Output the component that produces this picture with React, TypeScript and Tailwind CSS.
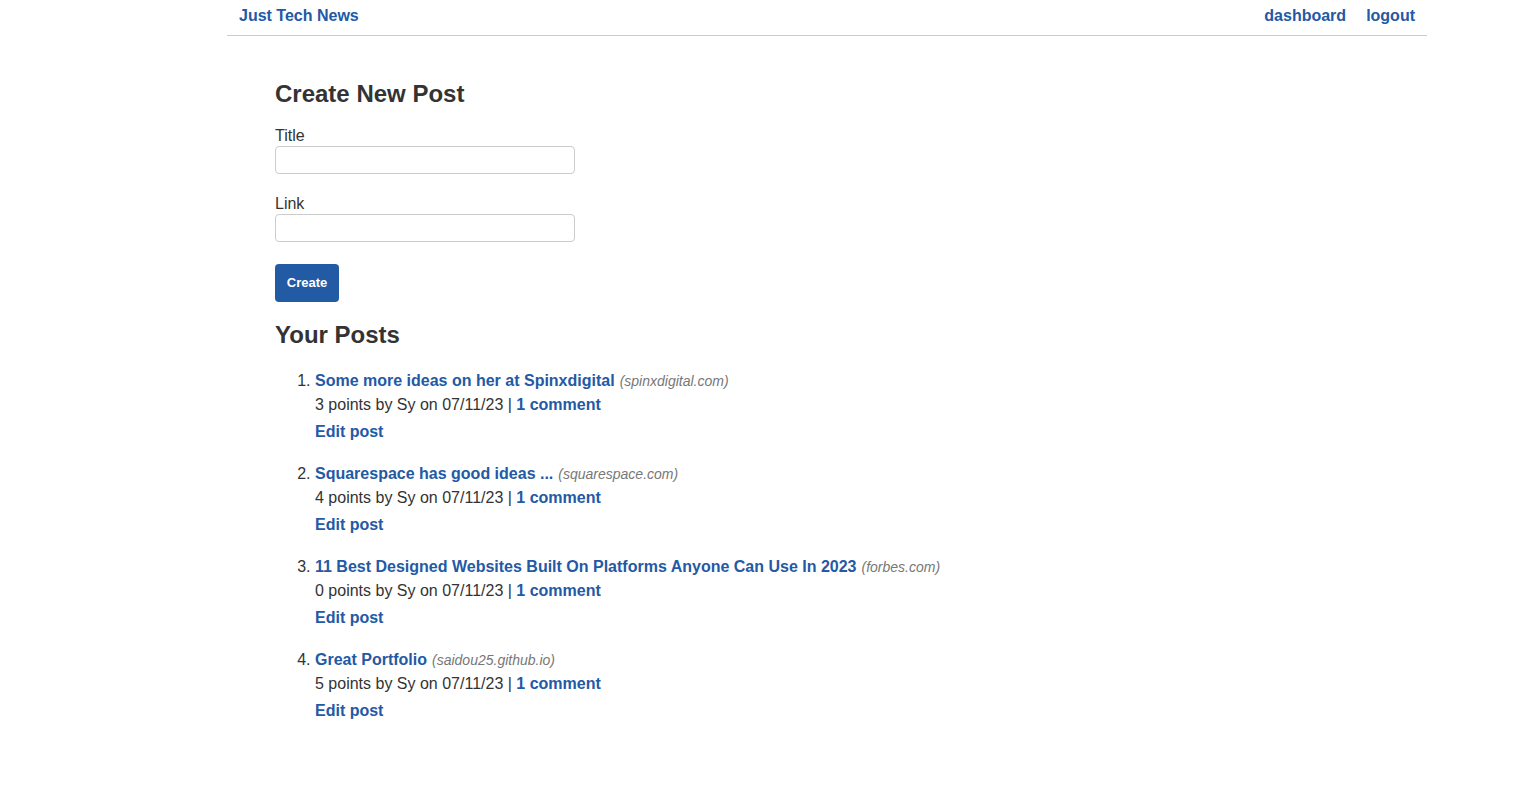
import React from 'react';

interface Post {
  id: number;
  title: string;
  domain: string;
  points: number;
}

const posts: Post[] = [
  { id: 1, title: 'Some more ideas on her at Spinxdigital', domain: 'spinxdigital.com', points: 3 },
  { id: 2, title: 'Squarespace has good ideas ...', domain: 'squarespace.com', points: 4 },
  { id: 3, title: '11 Best Designed Websites Built On Platforms Anyone Can Use In 2023', domain: 'forbes.com', points: 0 },
  { id: 4, title: 'Great Portfolio', domain: 'saidou25.github.io', points: 5 },
];

const link = 'font-bold text-[#2359a5] hover:underline';

export default function App() {
  return (
    <div className="min-h-screen bg-white text-[#333] [font-family:'Liberation_Sans',Arial,sans-serif]">
      <header className="ml-[227px] w-[1200px] h-[36px] flex items-start justify-between px-3 pt-[5px] border-b border-[#ccc]">
        <a href="#" className={`${link} text-[16px] leading-[22px]`}>Just Tech News</a>
        <nav className="flex gap-5 text-[16px] leading-[22px]">
          <a href="#" className={link}>dashboard</a>
          <a href="#" className={link}>logout</a>
        </nav>
      </header>

      <main className="ml-[275px] pt-[43px]">
        <h2 className="text-[24px] leading-[29px] font-bold">Create New Post</h2>
        <form className="mt-[18px]" onSubmit={(e) => e.preventDefault()}>
          <label className="block text-[16px] leading-[19px]">Title</label>
          <input className="mt-px block w-[300px] h-[28px] border border-[#ccc] rounded-[4px] px-2" />
          <label className="block mt-[20px] text-[16px] leading-[19px]">Link</label>
          <input className="mt-px block w-[300px] h-[28px] border border-[#ccc] rounded-[4px] px-2" />
          <button className="mt-[22px] w-[64px] h-[38px] rounded-[4px] bg-[#225aa4] text-white text-[13px] font-bold">
            Create
          </button>
        </form>

        <h2 className="mt-[18px] text-[24px] leading-[29px] font-bold">Your Posts</h2>
        <ol className="mt-[20px] list-decimal pl-[40px] text-[16px]">
          {posts.map((post) => (
            <li key={post.id} className="mb-[18px]">
              <div className="leading-6">
                <a href="#" className={link}>{post.title}</a>
                <span className="ml-[5px] text-[14px] italic text-[#777]">({post.domain})</span>
              </div>
              <div className="leading-6">
                {post.points} points by Sy on 07/11/23 | <a href="#" className={link}>1 comment</a>
              </div>
              <div className="mt-[3px] leading-6">
                <a href="#" className={link}>Edit post</a>
              </div>
            </li>
          ))}
        </ol>
      </main>
    </div>
  );
}
